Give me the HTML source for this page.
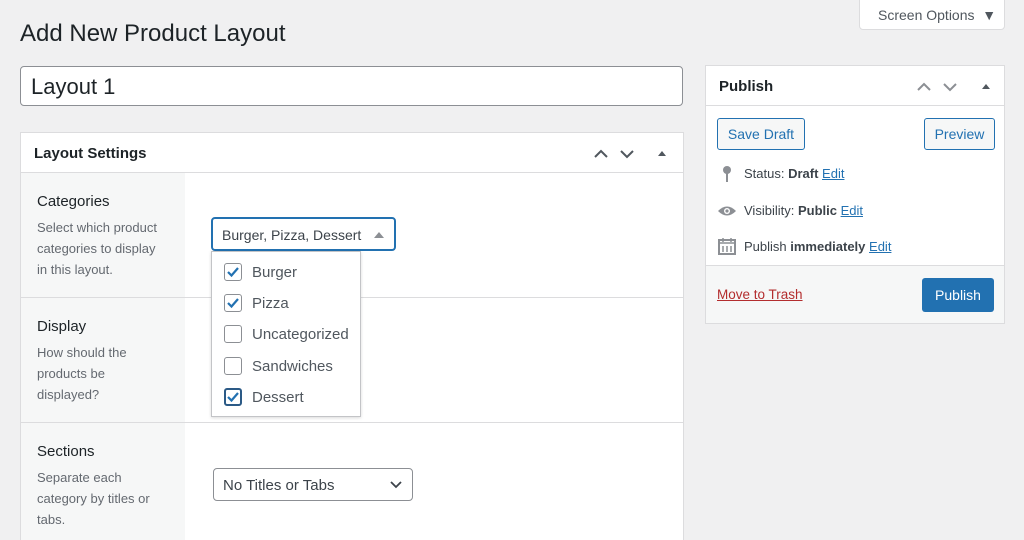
<!DOCTYPE html>
<html style="height:540px;overflow:hidden"><head><meta charset="utf-8"><style>
*{box-sizing:border-box;margin:0;padding:0}
body{width:1024px;height:540px;overflow:hidden;background:#f0f0f1;font-family:"Liberation Sans",sans-serif;color:#1d2327;position:relative}
.abs{position:absolute}
.so{left:859px;top:-2px;width:146px;height:32px;background:#fff;border:1px solid #dcdcde;border-radius:0 0 4px 4px;font-size:14px;color:#50575e;padding:8px 0 0 18px}
h1{position:absolute;left:20px;top:20px;font-size:24px;font-weight:400;color:#1d2327}
.title{left:20px;top:66px;width:663px;height:40px;background:#fff;border:1px solid #8c8f94;border-radius:4px;font-size:22px;padding:7px 10px}
.box{background:#fff;border:1px solid #dcdcde}
.ls{left:20px;top:132px;width:664px;height:420px;overflow:hidden}
.hdr{height:40px;border-bottom:1px solid #dcdcde;font-size:15px;font-weight:bold;padding:12px 13px}
.row{position:absolute;left:0;width:662px;border-top:1px solid #dcdcde}
.lab{position:absolute;left:0;top:0;bottom:0;width:164px;background:#f6f7f7;padding:20px 16px}
.lab b{display:block;font-size:15px;font-weight:normal;color:#1d2327;margin-bottom:7px}
.lab span{font-size:13px;color:#646970;line-height:21px;display:block}
.sel{left:211px;top:217px;width:185px;height:34px;border:2px solid #2271b1;border-radius:4px;background:#fff;font-size:14px;color:#3c434a;padding:8px 9px;white-space:nowrap}
.dd{left:211px;top:251px;width:150px;height:166px;background:#fff;border:1px solid #c3c4c7;box-shadow:0 1px 3px rgba(0,0,0,.15)}
.it{position:absolute;left:12px;font-size:15px;color:#50575e}
.cb{position:absolute;left:0;top:-1px;width:18px;height:18px;border:1px solid #8c8f94;border-radius:3px;background:#fff}
.it span{position:absolute;left:28px;top:0;white-space:nowrap}
.nt{left:213px;top:468px;width:200px;height:33px;border:1px solid #8c8f94;border-radius:4px;background:#fff;font-size:15px;color:#3c434a;padding:8px 9px}
.pb{left:705px;top:65px;width:300px;height:259px}
.btn{position:absolute;border:1px solid #2271b1;border-radius:3px;background:#f6f7f7;color:#2271b1;font-size:14px;text-align:center;padding-top:7px;height:32px}
.mi{position:absolute;left:38px;font-size:13px;color:#3c434a;white-space:nowrap}
.mi a{color:#2271b1;text-decoration:underline}
.foot{position:absolute;left:0;top:199px;width:298px;height:58px;background:#f6f7f7;border-top:1px solid #dcdcde}
</style></head><body>
<div class="abs so">Screen Options &nbsp;▼</div>
<h1>Add New Product Layout</h1>
<div class="abs title">Layout 1</div>

<div class="abs box ls">
 <div class="hdr">Layout Settings</div>
 <svg class="abs" style="left:572px;top:14px" width="80" height="14"><path d="M2 10l6-6 6 6M28 4l6 6 6-6" stroke="#50575e" stroke-width="2" fill="none"/><path d="M65 9l4-5 4 5z" fill="#50575e"/></svg>
 <div class="row" style="top:40px;height:124px;border-top:0"><div class="lab"><b>Categories</b><span>Select which product categories to display in this layout.</span></div></div>
 <div class="row" style="top:164px;height:125px"><div class="lab"><b>Display</b><span>How should the products be displayed?</span></div></div>
 <div class="row" style="top:289px;height:140px"><div class="lab"><b>Sections</b><span>Separate each category by titles or tabs.</span></div></div>
</div>

<div class="abs sel">Burger, Pizza, Dessert<svg class="abs" style="right:10px;top:13px" width="10" height="6"><path d="M0 6L5 0 10 6z" fill="#8c8f94"/></svg></div>
<div class="abs dd">
 <div class="it" style="top:12px"><div class="cb"><svg width="16" height="16"><path d="M3 8l3.5 3.5L13 4" stroke="#2271b1" stroke-width="2.2" fill="none"/></svg></div><span>Burger</span></div>
 <div class="it" style="top:43px"><div class="cb"><svg width="16" height="16"><path d="M3 8l3.5 3.5L13 4" stroke="#2271b1" stroke-width="2.2" fill="none"/></svg></div><span>Pizza</span></div>
 <div class="it" style="top:74px"><div class="cb"></div><span>Uncategorized</span></div>
 <div class="it" style="top:106px"><div class="cb"></div><span>Sandwiches</span></div>
 <div class="it" style="top:137px"><div class="cb" style="border:2px solid #2c5a86"><svg width="16" height="16" style="margin:-1px"><path d="M3 8l3.5 3.5L13 4" stroke="#2271b1" stroke-width="2.2" fill="none"/></svg></div><span>Dessert</span></div>
</div>
<div class="abs nt">No Titles or Tabs<svg class="abs" style="right:10px;top:12px" width="12" height="8"><path d="M1 1l5 5 5-5" stroke="#3c434a" stroke-width="1.8" fill="none"/></svg></div>

<div class="abs box pb">
 <div style="height:40px;border-bottom:1px solid #dcdcde;font-size:15px;font-weight:bold;padding:12px 13px">Publish</div>
 <svg class="abs" style="left:210px;top:14px" width="80" height="14"><path d="M2 10l6-6 6 6M28 4l6 6 6-6" stroke="#8c8f94" stroke-width="2" fill="none"/><path d="M66 9l4-5 4 5z" fill="#50575e"/></svg>
 <div class="btn" style="left:11px;top:52px;width:88px">Save Draft</div>
 <div class="btn" style="left:218px;top:52px;width:71px">Preview</div>
 <svg class="abs" style="left:14px;top:99px" width="14" height="18"><circle cx="7" cy="5" r="4" fill="#8c8f94"/><path d="M7 8v9" stroke="#8c8f94" stroke-width="2"/></svg>
 <div class="mi" style="top:100px">Status: <b>Draft</b> <a>Edit</a></div>
 <svg class="abs" style="left:11px;top:138px" width="20" height="14"><path d="M1 7Q10-2 19 7Q10 16 1 7z" fill="#8c8f94"/><circle cx="10" cy="7" r="3" fill="#fff"/><circle cx="10" cy="7" r="1.6" fill="#8c8f94"/></svg>
 <div class="mi" style="top:137px">Visibility: <b>Public</b> <a>Edit</a></div>
 <svg class="abs" style="left:12px;top:171px" width="18" height="18"><rect x="1" y="3" width="16" height="14" fill="none" stroke="#8c8f94" stroke-width="2"/><path d="M1 6h16M5 1v4M13 1v4M5 9v6M9 9v6M13 9v6" stroke="#8c8f94" stroke-width="1.5"/></svg>
 <div class="mi" style="top:173px">Publish <b>immediately</b> <a>Edit</a></div>
 <div class="foot">
  <div class="abs" style="left:11px;top:21px;font-size:13.5px;color:#b32d2e;text-decoration:underline">Move to Trash</div>
  <div class="abs" style="left:216px;top:12px;width:72px;height:34px;background:#2271b1;border-radius:3px;color:#fff;font-size:14px;text-align:center;padding-top:9px">Publish</div>
 </div>
</div>
</body></html>
